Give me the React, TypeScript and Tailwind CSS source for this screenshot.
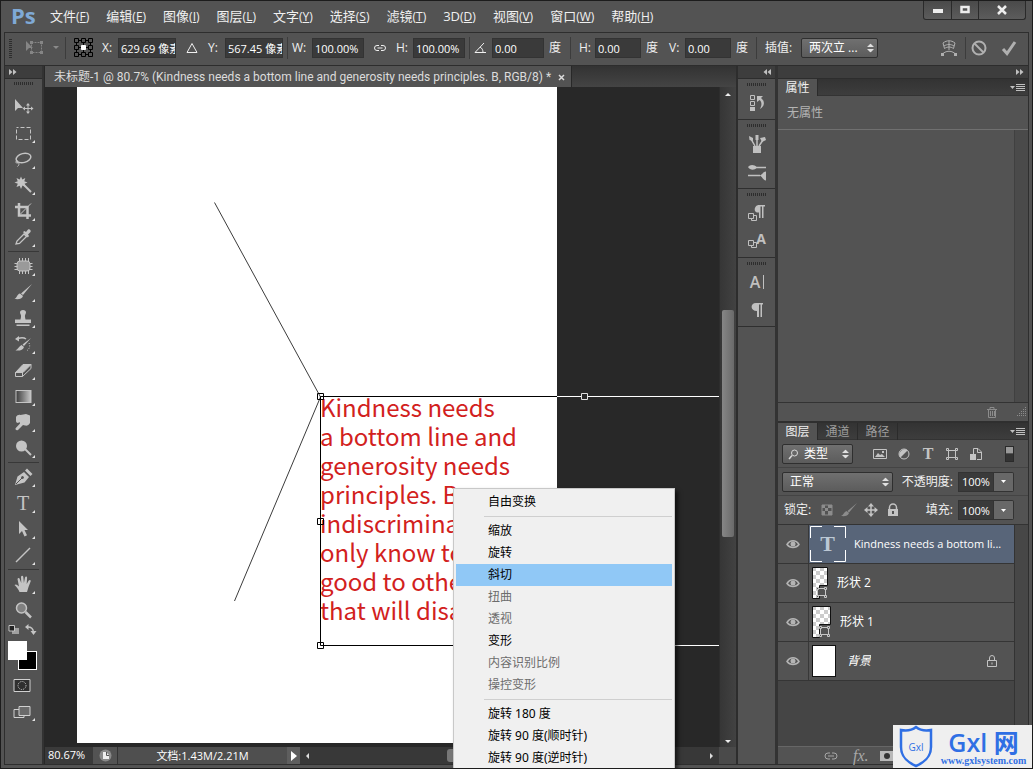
import React from "react"
import clsx from "clsx"

const MENUS = [
  ["文件", "F"],
  ["编辑", "E"],
  ["图像", "I"],
  ["图层", "L"],
  ["文字", "Y"],
  ["选择", "S"],
  ["滤镜", "T"],
  ["3D", "D"],
  ["视图", "V"],
  ["窗口", "W"],
  ["帮助", "H"],
]

const TEXT_LINES = [
  "Kindness needs",
  "a bottom line and",
  "generosity needs",
  "principles. B",
  "indiscrimina",
  "only know to",
  "good to othe",
  "that will disa",
]

const CONTEXT_MENU = [
  [{ label: "自由变换" }],
  [
    { label: "缩放" },
    { label: "旋转" },
    { label: "斜切", active: true },
    { label: "扭曲", disabled: true },
    { label: "透视", disabled: true },
    { label: "变形" },
    { label: "内容识别比例", disabled: true },
    { label: "操控变形", disabled: true },
  ],
  [
    { label: "旋转 180 度" },
    { label: "旋转 90 度(顺时针)" },
    { label: "旋转 90 度(逆时针)" },
  ],
] as { label: string; active?: boolean; disabled?: boolean }[][]

interface IconProps {
  children: React.ReactNode
  size?: number
  className?: string
}

const Icon = ({ children, size = 20, className }: IconProps) => (
  <svg
    width={size}
    height={size}
    viewBox={`0 0 ${size} ${size}`}
    fill="none"
    stroke="currentColor"
    aria-hidden="true"
    className={clsx("shrink-0 overflow-visible", className)}
  >
    {children}
  </svg>
)

// Tools, split in the groups of the toolbar
const TOOL_GROUPS: { name: string; single?: boolean; icon: React.ReactNode }[][] = [
  [
    {
      name: "移动",
      single: true,
      icon: (
        <>
          <path d="M2 2v12l3-3h5z" fill="currentColor" stroke="none" />
          <path d="M15 7v9M11 11.500h9" />
          <path d="M15 6l-2 2.500h4zM15 17l-2-2.500h4zM9.500 11.500l2.500-2v4zM20.500 11.500l-2.500-2v4z" fill="currentColor" stroke="none" />
        </>
      ),
    },
    { name: "矩形选框", icon: <rect x="3.500" y="4.500" width="14" height="12" strokeDasharray="4 2" strokeDashoffset="2" /> },
    {
      name: "套索",
      icon: (
        <>
          <ellipse cx="10.500" cy="9" rx="7.500" ry="4.500" transform="rotate(-14 10.500 9)" strokeWidth="1.500" />
          <path d="M5 12c-2.500-.5-3 2-1 2s1.500-1.500 0-1c2.500.5 2.500 3 .5 4.500" />
        </>
      ),
    },
    {
      name: "魔棒",
      icon: (
        <>
          <path d="M8 1.500l1.300 3 3-1.500-1 3.200 3.200 1.300-3 1.300 1.300 3.200-3.300-1.500L8 14l-1.300-3.300L3.500 12l1.300-3.200L1.500 7.500l3.200-1.300L3.500 3l3.200 1.500z" fill="currentColor" stroke="none" />
          <path d="M10 9l8 8" strokeWidth="2" />
        </>
      ),
    },
    {
      name: "裁剪",
      icon: (
        <>
          <path d="M6 2v12.500h12M2 6h12.500v12" strokeWidth="2.500" />
          <path d="M7.500 13L18 2.500" />
        </>
      ),
    },
    {
      name: "吸管",
      icon: (
        <>
          <path d="M3 17l1-3 7-7 2.500 2.500-7 7z" strokeWidth="1.300" />
          <path d="M10 5l1.500-1 1.500 1 2-2.500c1.500-1 3.500 1 2.500 2.500L15 7.500l1 1.500-1.200 1.500z" fill="currentColor" stroke="none" />
        </>
      ),
    },
  ],
  [
    {
      name: "修补",
      icon: (
        <>
          <rect x="4" y="5" width="13" height="10" rx="3" fill="#9a9a9a" />
          <path d="M6.500 2v3M9.500 2v3M12.500 2v3M15.500 2v3M6.500 15v3M9.500 15v3M12.500 15v3M15.500 15v3M1.500 7.500h3M1.500 10.500h3M1.500 13.500h3M17 7.500h2.500M17 10.500h2.500M17 13.500h2.500" />
        </>
      ),
    },
    { name: "画笔", icon: <path d="M19 2L10 13l-2-1.500zM7 11.500l3 2.500c-1 3-4 3.500-8.500 3 2.500-1 2.500-5 5.500-5.500z" fill="currentColor" stroke="none" /> },
    { name: "图章", icon: <path d="M8 9c.5-2-1-3-1-4.500a3 2.500 0 016 0C13 6 11.500 7 12 9l.5 2.500H18V15H2v-3.500h5.500zM3.500 16.500h13V18h-13z" fill="currentColor" stroke="none" /> },
    {
      name: "历史记录画笔",
      icon: (
        <>
          <path d="M18 4l-7 8-1.500-1.500zM8.500 11l2.500 2c-1 3-4 4-8.500 3.500 2.500-1 3.500-4.500 6-5.500zM2 5l4-3v5.500z" fill="currentColor" stroke="none" />
          <path d="M5 4.500c3-1 6-1 8 .5" strokeWidth="1.500" />
          <path d="M16 9c1.500 3 .5 6-2.500 8" strokeDasharray="1 1.500" />
        </>
      ),
    },
    {
      name: "橡皮擦",
      icon: (
        <>
          <path d="M2.500 12.500L10 4.500h8l-8 8z" fill="currentColor" />
          <path d="M2.500 12.500h7v4h-7zM9.500 16.500l8.500-8v-4" />
        </>
      ),
    },
    {
      name: "渐变",
      icon: (
        <>
          <defs>
            <linearGradient id="tool-gradient">
              <stop stopColor="#3c3c3c" />
              <stop offset="1" stopColor="#c8c8c8" />
            </linearGradient>
          </defs>
          <rect x="3" y="4.500" width="15" height="12" fill="url(#tool-gradient)" />
        </>
      ),
    },
    { name: "涂抹", icon: <path d="M3 5c1-2 3-2.500 4.500-2L13 2l4 1.500v7.500c-1 2-3 3-5 2.500l-2-.5-5 5c-1.500 1-3.300-.5-2.200-2L7 11.500 6.500 10 5 11c-1.500 0-2.200-1-2-3z" fill="currentColor" stroke="none" /> },
    {
      name: "减淡",
      icon: (
        <>
          <circle cx="8.500" cy="8" r="5.500" fill="currentColor" stroke="none" />
          <path d="M12 11l6 6" strokeWidth="2" />
        </>
      ),
    },
  ],
  [
    {
      name: "钢笔",
      icon: (
        <>
          <path d="M2 18L4.500 9.500 11 5l5 5-4.500 5.500zM12 3.500L14 1.500 19.500 7l-2 2z" fill="currentColor" stroke="none" />
          <path d="M3 17l6-6" stroke="#535353" />
          <circle cx="9.500" cy="10.500" r="1" fill="#535353" stroke="#535353" />
        </>
      ),
    },
    {
      name: "横排文字",
      icon: (
        <text x="10" y="17" textAnchor="middle" fill="currentColor" stroke="none" className="font-['Liberation_Serif'] text-[20px]">
          T
        </text>
      ),
    },
    { name: "路径选择", icon: <path d="M6 2v13l3-3 2.500 5.500 2.500-1.200L11.500 11H15z" fill="currentColor" stroke="none" /> },
    { name: "直线", icon: <path d="M3 17L17 3" strokeWidth="1.500" /> },
  ],
  [
    { name: "抓手", icon: <path d="M6.500 18c-1-3-3-5-5-7 1.500-1.500 3 0 4.500 1.500L4.500 5c.5-1.500 2-1 2.300.2L8.300 9 8 3c.3-1.600 2-1.600 2.300 0l.6 6L12 3.500c.5-1.500 2-1.200 2.100.3L13.700 10l2-3.500c1-1.200 2.300-.5 2 .8L15.500 13l-1.500 5z" fill="currentColor" stroke="none" /> },
    {
      name: "缩放",
      single: true,
      icon: (
        <>
          <circle cx="8.500" cy="8" r="5" fill="#808080" strokeWidth="1.500" />
          <path d="M12.500 12l5.500 5.500" strokeWidth="2.500" />
        </>
      ),
    },
  ],
]

const Grip = ({ className }: { className?: string }) => (
  <div className={clsx("h-[3px] w-5 bg-[repeating-linear-gradient(90deg,#2d2d2d_0_1px,transparent_1px_2px)]", className)} />
)

const Chevrons = ({ left }: { left?: boolean }) => (
  <svg width="8" height="6" viewBox="0 0 8 6" fill="#c0c0c0" aria-hidden="true" className={clsx(left && "rotate-180")}>
    <path d="M0 0l3.500 3L0 6zM4 0l3.500 3L4 6z" />
  </svg>
)

const UpDown = () => (
  <svg width="7" height="9" viewBox="0 0 7 9" fill="#e0e0e0" aria-hidden="true" className="pointer-events-none absolute top-1/2 right-[4px] -translate-y-1/2">
    <path d="M0 3.500L3.500 0 7 3.500zM0 5.500h7L3.500 9z" />
  </svg>
)

const Dropdown = ({ label, value, className, search }: { label: string; value: string; className?: string; search?: boolean }) => (
  <div className={clsx("relative h-5 shrink-0", className)}>
    <select
      aria-label={label}
      className={clsx(
        "block h-full w-full appearance-none rounded-[2px] border border-[#2f2f2f] bg-linear-to-b from-[#707070] to-[#5c5c5c] text-[12px] leading-[16px] text-white",
        search ? "pl-[21px]" : "pl-[7px]"
      )}
    >
      <option>{value}</option>
    </select>
    {search && (
      <Icon size={11} className="pointer-events-none absolute top-[5px] left-[6px] text-[#d8d8d8]">
        <circle cx="6.500" cy="4" r="3" />
        <path d="M4 6.500L1 10" strokeWidth="1.500" />
      </Icon>
    )}
    <UpDown />
  </div>
)

const Divider = () => <span className="h-[22px] w-px shrink-0 border-l border-[#3c3c3c]" />

interface FieldProps {
  label: React.ReactNode
  name: string
  value: string
  unit?: string
  labelClass: string
  inputClass: string
}

const Field = ({ label, name, value, unit, labelClass, inputClass }: FieldProps) => (
  <div className="flex shrink-0 items-center">
    <label htmlFor={name} className={clsx("flex items-center", labelClass)}>
      {label}
    </label>
    <input
      id={name}
      aria-label={name}
      defaultValue={value}
      className={clsx("h-5 border border-[#333] bg-[#3a3a3a] pl-[2px] text-[11px] text-white outline-none", inputClass)}
    />
    {unit && <span className="w-[17px] pl-[5px] text-[12px] whitespace-nowrap">{unit}</span>}
  </div>
)

const MenuBar = () => (
  <header className="flex h-[31px] shrink-0 items-start pl-[10px]">
    <span className="w-[39px] font-['Open_Sans'] text-[22px] leading-[28px] font-bold text-[#7fa9d6]">Ps</span>
    <nav className="flex min-w-0 flex-1 gap-[17px]">
      {MENUS.map(([label, key]) => (
        <button key={key} className="text-[13px] leading-[30px] whitespace-nowrap">
          {label}
          <span className="text-[12px]">
            (<span className="underline">{key}</span>)
          </span>
        </button>
      ))}
    </nav>
    <div className="mr-[6px] flex h-[19px] rounded-b-[3px] border border-t-0 border-[#2a2a2a] bg-linear-to-b from-[#4a4a4a] to-[#5c5c5c] text-[#ededed]">
      <button aria-label="最小化" className="flex w-[28px] items-center justify-center border-r border-[#2a2a2a]">
        <Icon size={12}>
          <path d="M1 7h10" strokeWidth="4" />
        </Icon>
      </button>
      <button aria-label="最大化" className="flex w-[27px] items-center justify-center border-r border-[#2a2a2a]">
        <Icon size={12}>
          <path d="M2.500 3h7v5h-7z" strokeWidth="2.500" />
        </Icon>
      </button>
      <button aria-label="关闭" className="flex w-[46px] items-center justify-center">
        <Icon size={12}>
          <path d="M2 2l8 8M10 2l-8 8" strokeWidth="2.500" />
        </Icon>
      </button>
    </div>
  </header>
)

const OptionsBar = () => (
  <div className="flex h-[33px] shrink-0 items-center border-b border-[#2d2d2d] pb-[2px] text-[12px]">
    <div className="ml-[4px] h-5 w-[3px] bg-[repeating-linear-gradient(0deg,#2d2d2d_0_1px,transparent_1px_2px)]" />
    <Icon size={18} className="ml-[14px] text-[#858585]">
      <path d="M0 2v10l3-3h4z" fill="currentColor" stroke="none" />
      <rect x="5.500" y="3.500" width="10" height="10" strokeDasharray="2 1" />
      <path d="M4 2h3v3H4zM14 2h3v3h-3zM14 12h3v3h-3zM4 12h3v3H4z" fill="currentColor" stroke="none" />
    </Icon>
    <Icon size={6} className="ml-[9px] text-[#8a8a8a]">
      <path d="M0 1h6L3 4z" fill="currentColor" stroke="none" />
    </Icon>
    <div className="w-[6px]" />
    <Divider />
    <Icon size={20} className="mx-[8px] text-black">
      <path d="M2.500 2.500h14v14h-14zM9.500 2v15M2 9.500h15" />
      <path
        d="M.5 .5h4v4h-4zM7.500 .5h4v4h-4zM14.500 .5h4v4h-4zM.5 7.500h4v4h-4zM14.500 7.500h4v4h-4zM.5 14.500h4v4h-4zM7.500 14.500h4v4h-4zM14.500 14.500h4v4h-4z"
        fill="#535353"
      />
      <path d="M7.500 7.500h4v4h-4z" fill="#fff" stroke="#fff" />
    </Icon>
    <Field name="X" label="X:" value="629.69 像素" labelClass="w-[16px]" inputClass="w-[58px]" />
    <button aria-label="相对定位" className="flex w-[32px] justify-center">
      <Icon size={12}>
        <path d="M6 1.500l5 9H1z" />
      </Icon>
    </button>
    <Field name="Y" label="Y:" value="567.45 像素" labelClass="w-[17px]" inputClass="w-[58px]" />
    <div className="w-[4px]" />
    <Divider />
    <Field name="W" label="W:" value="100.00%" labelClass="w-[24px] pl-[4px]" inputClass="w-[52px]" />
    <button aria-label="保持长宽比" className="flex w-[32px] justify-center">
      <Icon size={12}>
        <path d="M5 3.500H3a2.500 2.500 0 000 5h2M7 3.500h2a2.500 2.500 0 010 5H7M3.500 6h5" />
      </Icon>
    </button>
    <Field name="H" label="H:" value="100.00%" labelClass="w-[17px]" inputClass="w-[52px]" />
    <div className="w-[4px]" />
    <Divider />
    <Field
      name="旋转"
      label={
        <Icon size={14}>
          <path d="M11 2L2 11.500h11M7 6c2 1 3 3 3 5.500" />
        </Icon>
      }
      value="0.00"
      unit="度"
      labelClass="w-[22px] pl-[3px]"
      inputClass="w-[52px]"
    />
    <div className="w-[9px]" />
    <Divider />
    <Field name="水平斜切" label="H:" value="0.00" unit="度" labelClass="w-[24px] pl-[8px]" inputClass="w-[46px]" />
    <Field name="垂直斜切" label="V:" value="0.00" unit="度" labelClass="w-[27px] pl-[11px]" inputClass="w-[46px]" />
    <div className="w-[8px]" />
    <Divider />
    <span className="w-[44px] pl-[8px] whitespace-nowrap">插值:</span>
    <Dropdown label="插值" value="两次立 ..." className="w-[77px]" />
    <div className="ml-auto flex items-center text-[#b0b0b0]">
      <button aria-label="变形模式">
        <Icon size={18}>
          <path d="M3 4c4-3 8-3 12 0l-1.500 5.500c-3-2-6-2-9 0zM9 2v9M4 7c3-2 7-2 10 0M1.500 16c4-5 11-5 15 0" />
          <path d="M1 14h3v3H1zM14 14h3v3h-3z" fill="currentColor" stroke="none" />
        </Icon>
      </button>
      <div className="w-[7px]" />
      <Divider />
      <button aria-label="取消" className="mr-[14px] ml-[5px]">
        <Icon size={16}>
          <circle cx="8" cy="8" r="6.500" strokeWidth="2" />
          <path d="M3.500 3.500l9 9" strokeWidth="2" />
        </Icon>
      </button>
      <button aria-label="提交" className="mr-[11px]">
        <Icon size={16}>
          <path d="M2 9l4 4.500L14 2" strokeWidth="3" />
        </Icon>
      </button>
    </div>
  </div>
)

const Toolbar = () => (
  <aside className="flex w-[39px] shrink-0 flex-col border-r-2 border-[#333]">
    <div className="flex h-[13px] items-center border-b border-[#2d2d2d] bg-[#3d3d3d] pl-[4px]">
      <Chevrons />
    </div>
    <Grip className="mt-[3px] ml-[9px]" />
    <div className="mt-[9px] flex flex-col text-[#c4c4c4]">
      {TOOL_GROUPS.map((group, i) => (
        <div key={i} className="flex flex-col">
          {i > 0 && <div className="mx-[3px] my-px h-px bg-[#383838]" />}
          {group.map(({ name, icon, single }) => (
            <button key={name} aria-label={name} className="relative flex h-[26px] items-center pl-[8px]">
              <Icon>{icon}</Icon>
              {!single && <span className="absolute right-[7px] bottom-[3px] border-b-3 border-l-3 border-b-[#e4e4e4] border-l-transparent" />}
            </button>
          ))}
        </div>
      ))}
    </div>
    <div className="mt-px flex justify-between pr-[6px] pl-[3px] text-[#c4c4c4]">
      <Icon size={11}>
        <path d="M4 4h7v6H4z" fill="#a0a0a0" stroke="none" />
        <path d="M1 1.500h5.500V7H1z" fill="#222" />
      </Icon>
      <Icon size={11}>
        <path d="M3 3c3 0 5 1 5.500 5" strokeWidth="1.500" />
        <path d="M0 3l3.500-3v6zM5.500 7h6l-3 4z" fill="currentColor" stroke="none" />
      </Icon>
    </div>
    <div className="relative mt-[6px] ml-[3px] h-[29px] w-[29px]">
      <button aria-label="背景色" className="absolute right-0 bottom-0 size-[19px] border border-white bg-black" />
      <button aria-label="前景色" className="absolute top-0 left-0 size-[19px] bg-white" />
    </div>
    <button aria-label="快速蒙版" className="mt-[6px] ml-[8px] text-[#d0d0d0]">
      <Icon size={18}>
        <path d="M1 3.500h16v12H1z" fill="#2f2f2f" />
        <circle cx="9" cy="9.500" r="4" strokeDasharray="1 1" />
      </Icon>
    </button>
    <button aria-label="屏幕模式" className="relative mt-[9px] pl-[8px] text-[#d0d0d0]">
      <Icon size={18}>
        <path d="M1 6.500h10v8H1z" />
        <path d="M6 3.500h11v9H6z" fill="#6a6a6a" />
      </Icon>
      <span className="absolute right-[7px] bottom-0 border-b-3 border-l-3 border-b-[#e4e4e4] border-l-transparent" />
    </button>
  </aside>
)

const Canvas = () => (
  <div className="relative min-w-0 flex-1 overflow-hidden bg-[#282828] pb-[4px] pl-[32px]">
    <div className="h-full w-[480px] bg-white" />
    <p className="absolute top-[305px] left-[275px] font-['Noto_Sans_CJK_SC'] text-[24px] leading-[29px] whitespace-nowrap text-[#d2211d]">
      {TEXT_LINES.map((line) => (
        <span key={line} className="block">
          {line}
        </span>
      ))}
    </p>
    <svg width="674" height="655" className="absolute top-0 left-0" fill="none" aria-hidden="true">
      <path d="M169.500 115.500L275.500 310L189.500 514" stroke="#3c3c3c" />
      <path d="M512 309.500H275.500V558.500H512" stroke="#000" />
      <path d="M512 309.500H674M512 558.500H674" stroke="#fff" />
      <path d="M272.500 306.500h6v6h-6zM272.500 431.500h6v6h-6zM272.500 555.500h6v6h-6z" stroke="#000" />
      <path d="M536.500 306.500h6v6h-6z" stroke="#e0e0e0" fill="#282828" />
    </svg>
  </div>
)

const StatusBar = () => (
  <footer className="flex h-[17px] shrink-0 items-center bg-[#3a3a3a] text-[11px] text-white">
    <span className="w-[48px] pl-[3px]">80.67%</span>
    <button aria-label="导出" className="flex h-full w-[24px] items-center justify-center bg-[#535353] text-[#bdbdbd]">
      <Icon size={13}>
        <circle cx="6.500" cy="6.500" r="6" fill="#8a8a8a" stroke="none" />
        <path d="M4 3h3l3 3v4H4z" fill="#eee" stroke="none" />
        <path d="M7.500 3v3.500H10" stroke="#555" />
      </Icon>
    </button>
    <span className="h-full w-[170px] border-l border-[#333] bg-[#4f4f4f] text-center leading-[17px]">文档:1.43M/2.21M</span>
    <button aria-label="状态菜单" className="flex h-full w-[13px] items-center justify-center bg-[#5e5e5e]">
      <svg width="6" height="10" viewBox="0 0 6 10" fill="#fff">
        <path d="M0 0l6 5-6 5z" />
      </svg>
    </button>
    <div className="flex h-full min-w-0 flex-1 items-center justify-between bg-[#383838] px-[6px]">
      <svg width="3" height="6" viewBox="0 0 3 6" fill="#ddd">
        <path d="M3 0v6L0 3z" />
      </svg>
      <div className="h-[13px] w-[126px] rounded-[3px] bg-[#777]" />
      <svg width="3" height="6" viewBox="0 0 3 6" fill="#ddd">
        <path d="M0 0v6l3-3z" />
      </svg>
    </div>
    <div className="h-full w-[17px] bg-[#4a4a4a]" />
  </footer>
)

const DocumentArea = () => (
  <main className="flex min-w-0 flex-1 flex-col border-l border-[#282828]">
    <div className="flex h-[21px] shrink-0 bg-linear-to-b from-[#333] to-[#444]">
      <div className="flex items-center border-r border-[#282828] bg-[#535353] pt-px pr-[6px] pl-[9px]">
        <span className="font-['Roboto','Noto_Sans_CJK_SC',sans-serif] text-[12px] whitespace-nowrap text-[#dcdcdc]">
          未标题-1 @ 80.7% (Kindness needs a bottom line and generosity needs principles. B, RGB/8) *
        </span>
        <button aria-label="关闭文档" className="ml-[7px] text-[#dcdcdc]">
          <Icon size={7}>
            <path d="M1 1l5 5M6 1L1 6" strokeWidth="1.500" />
          </Icon>
        </button>
      </div>
    </div>
    <div className="flex min-h-0 flex-1">
      <Canvas />
      <div className="flex w-[17px] shrink-0 flex-col items-center border-l border-[#2d2d2d] bg-linear-to-r from-[#363636] to-[#424242]">
        <svg width="6" height="3" viewBox="0 0 6 3" fill="#eee" className="mt-[6px] shrink-0">
          <path d="M0 3l3-3 3 3z" />
        </svg>
        <div className="grow-[213]" />
        <div className="w-[12px] grow-[227] rounded-[2px] bg-linear-to-r from-[#868686] to-[#6a6a6a]" />
        <div className="grow-[202]" />
        <svg width="6" height="3" viewBox="0 0 6 3" fill="#eee" className="mb-[4px] shrink-0">
          <path d="M0 0h6L3 3z" />
        </svg>
      </div>
    </div>
    <StatusBar />
  </main>
)

const DOCK: { name: string; icon: React.ReactNode }[][] = [
  [
    {
      name: "历史记录",
      icon: (
        <>
          <path d="M3.500 2.500h4v4h-4zM3.500 8.500h4v4h-4z" />
          <path d="M3 14h5v4H3z" fill="currentColor" stroke="none" />
          <path d="M10 3h6l-2 2c4 3 4 8-1 11 2-4 2-7-.5-9L10 9z" fill="currentColor" stroke="none" />
        </>
      ),
    },
  ],
  [
    {
      name: "画笔预设",
      icon: (
        <>
          <path d="M6 12h8v7H6z" fill="currentColor" stroke="none" />
          <path d="M8 12L4 5M10 12V5M12 12l4-6" strokeWidth="1.500" />
          <path d="M2 2l4 2v3L2.500 6zM8.500 1h3v5h-3zM13 4l5-1 1 3-4 2z" fill="currentColor" stroke="none" />
        </>
      ),
    },
    {
      name: "画笔",
      icon: (
        <>
          <path d="M8 5.500h11M1 13.500h12" strokeWidth="1.500" />
          <path d="M1 5c2-2.500 6-3 9 .5C7 9 3 8 1 5zM12 13.500c3 0 4-4 7-4v9c-3 0-4-5-7-5z" fill="currentColor" stroke="none" />
        </>
      ),
    },
  ],
  [
    {
      name: "段落样式",
      icon: (
        <>
          <path d="M11 9.500C6 10 7 2 12 2h6v1.500h-1.500V15H15V3.500h-1.500V15H12V9.500z" fill="currentColor" stroke="none" />
          <path d="M1.500 10.500h5v5h-5z" />
          <path d="M6.500 12.500h3v5h-5v-2" />
        </>
      ),
    },
    {
      name: "字符样式",
      icon: (
        <>
          <text x="14" y="13" textAnchor="middle" fill="currentColor" stroke="none" className="text-[14px] font-bold">
            A
          </text>
          <path d="M1.500 9.500h5v5h-5z" />
          <path d="M6.500 11.500h3v5h-5v-2" />
        </>
      ),
    },
  ],
  [
    {
      name: "字符",
      icon: (
        <>
          <text x="8" y="16" textAnchor="middle" fill="currentColor" stroke="none" className="text-[16px] font-semibold">
            A
          </text>
          <path d="M16.500 3v14" />
        </>
      ),
    },
    { name: "段落", icon: <path d="M10 11C3 11 3 3 9 3h7v1.500h-1V17h-1.500V4.500H12V17h-2z" fill="currentColor" stroke="none" /> },
  ],
]

const IconDock = () => (
  <aside className="flex w-[41px] shrink-0 flex-col border-x-2 border-l-[#2d2d2d] border-r-[#333]">
    <div className="flex h-[13px] shrink-0 items-center justify-end border-b border-[#2d2d2d] bg-[#3d3d3d] pr-[4px]">
      <Chevrons left />
    </div>
    {DOCK.map((group, i) => (
      <div key={i} className="border-b border-[#2f2f2f] pb-[2px] text-[#c0c0c0]">
        <div className="flex h-[10px] items-center justify-center">
          <Grip />
        </div>
        {group.map(({ name, icon }) => (
          <button key={name} aria-label={name} className="flex h-[28px] w-full items-center justify-center">
            <Icon>{icon}</Icon>
          </button>
        ))}
      </div>
    ))}
  </aside>
)

const PanelTabs = ({ tabs }: { tabs: string[] }) => (
  <div className="flex h-[17px] shrink-0 border-b border-[#333] bg-linear-to-b from-[#333] to-[#3d3d3d] text-[12px]">
    {tabs.map((tab, i) => (
      <button
        key={tab}
        className={clsx(
          "-mb-px h-[17px] w-[40px] border-r border-[#2b2b2b] leading-[16px]",
          i === 0 ? "bg-[#535353] text-[#f0f0f0]" : "text-[#9d9d9d]"
        )}
      >
        {tab}
      </button>
    ))}
    <button aria-label="面板菜单" className="mr-[3px] ml-auto">
      <svg width="15" height="9" viewBox="0 0 15 9" stroke="#c0c0c0" fill="#c0c0c0">
        <path d="M6 1.500h9M6 3.500h9M6 5.500h9M6 7.500h9" />
        <path d="M0 3h5L2.500 6z" stroke="none" />
      </svg>
    </button>
  </div>
)

const PercentField = ({ label }: { label: string }) => (
  <div className="ml-auto flex items-center">
    <label htmlFor={label} className="pr-[5px] text-[12px] whitespace-nowrap">
      {label}:
    </label>
    <input id={label} defaultValue="100%" className="h-5 w-[36px] border border-[#333] bg-[#3a3a3a] pl-[3px] text-[11px] text-white outline-none" />
    <button aria-label={label + "滑块"} className="flex h-5 w-[20px] items-center justify-center rounded-r-[2px] border border-l-0 border-[#333] bg-[#686868]">
      <svg width="5" height="3" viewBox="0 0 5 3" fill="#fff">
        <path d="M0 0h5L2.500 3z" />
      </svg>
    </button>
  </div>
)

const ShapeThumb = ({ width }: { width: number }) => (
  <svg width={width} height="32" aria-hidden="true" className="ml-[3px] overflow-visible">
    <defs>
      <pattern id="checker" width="8" height="8" patternUnits="userSpaceOnUse">
        <path d="M0 0h8v8H0z" fill="#fff" />
        <path d="M0 0h4v4H0zM4 4h4v4H4z" fill="#ccc" />
      </pattern>
    </defs>
    <path d={`M.5 .5h${width - 1}v18h${8 - width}v13H.5z`} fill="url(#checker)" stroke="#111" />
    <g fill="#535353" stroke="#c8c8c8">
      <path d={`M${width - 10.5} 21.500h8v7h-8z`} />
      <path d={`M${width - 11.5} 20.500h2v2h-2zM${width - 3.5} 20.500h2v2h-2zM${width - 3.5} 28.500h2v2h-2zM${width - 11.5} 28.500h2v2h-2z`} />
    </g>
  </svg>
)

const LAYERS = [
  {
    name: "Kindness needs a bottom li...",
    selected: true,
    gap: "ml-[8px]",
    thumb: (
      <svg width="36" height="36" fill="none" aria-hidden="true" className="ml-px">
        <path d="M.5 12V.5H12M24 .5h11.500V12M35.500 24v11.500H24M12 35.500H.5V24" stroke="#fff" />
        <text x="17.500" y="25" textAnchor="middle" fill="#bcc8d4" className="font-['Liberation_Serif'] text-[22px] font-bold">
          T
        </text>
      </svg>
    ),
  },
  { name: "形状 2", gap: "ml-[9px]", thumb: <ShapeThumb width={16} /> },
  { name: "形状 1", gap: "ml-[9px]", thumb: <ShapeThumb width={19} /> },
  {
    name: "背景",
    italic: true,
    locked: true,
    gap: "ml-[11px]",
    thumb: <div className="ml-[3px] h-[32px] w-[24px] border border-[#111] bg-white" />,
  },
]

const LockIcon = () => (
  <Icon size={14}>
    <path d="M2.500 6.500h9v6h-9zM4.500 6.500V4a2.500 2.500 0 015 0v2.500M7 8.500v2" />
  </Icon>
)

const LayersPanel = () => (
  <section className="flex min-h-0 flex-1 flex-col">
    <PanelTabs tabs={["图层", "通道", "路径"]} />
    <div className="flex h-[28px] shrink-0 items-center border-b border-[#444] pr-[14px] pl-[4px] text-[#c4c4c4]">
      <Dropdown label="滤镜类型" value="类型" search className="w-[71px]" />
      <div className="ml-[20px] flex flex-1 items-center gap-[10px]">
        <button aria-label="像素图层">
          <Icon size={14}>
            <path d="M.5 2.500h13v9H.5z" />
            <path d="M2 10l3-4 2 2 2-1 3 3zM9 4h2v2H9z" fill="currentColor" stroke="none" />
          </Icon>
        </button>
        <button aria-label="调整图层">
          <Icon size={14}>
            <circle cx="7" cy="7" r="5" />
            <path d="M3.500 10.500a5 5 0 017-7z" fill="currentColor" stroke="none" />
          </Icon>
        </button>
        <button aria-label="文字图层">
          <Icon size={14}>
            <text x="7" y="12" textAnchor="middle" fill="currentColor" stroke="none" className="font-['Liberation_Serif'] text-[16px] leading-[14px] font-bold">
              T
            </text>
          </Icon>
        </button>
        <button aria-label="形状图层">
          <Icon size={14}>
            <path d="M3.500 3.500h7v7h-7zM1.500 1.500h2v2h-2zM10.500 1.500h2v2h-2zM10.500 10.500h2v2h-2zM1.500 10.500h2v2h-2z" />
          </Icon>
        </button>
        <button aria-label="智能对象">
          <Icon size={14}>
            <path d="M4.500 7V1.500H9l3.500 3.500v7.500H8M8.500 1.500v4h4" />
            <path d="M1 7h6v6H1z" fill="currentColor" stroke="none" />
          </Icon>
        </button>
      </div>
      <button aria-label="打开滤镜" className="h-[16px] w-[9px] border border-[#2b2b2b] bg-linear-to-b from-[#999] from-40% to-[#333] to-50%" />
    </div>
    <div className="flex h-[28px] shrink-0 items-center border-b border-[#444] pr-[14px] pl-[4px]">
      <Dropdown label="混合模式" value="正常" className="w-[111px]" />
      <PercentField label="不透明度" />
    </div>
    <div className="flex h-[29px] shrink-0 items-center border-b border-[#333] pr-[14px] pl-[6px]">
      <span className="text-[12px]">锁定:</span>
      <div className="ml-[8px] flex items-center gap-[6px] text-[#8c8c8c]">
        <button aria-label="锁定透明像素">
          <Icon size={16}>
            <path d="M3 3h10v10H3z" />
            <path d="M3 3h3v3H3zM9 3h4v3H9zM6 6h3v3H6zM3 9h3v4H3zM9 9h4v4H9z" fill="currentColor" stroke="none" />
          </Icon>
        </button>
        <button aria-label="锁定图像像素">
          <Icon size={16}>
            <path d="M16 1L8 10.500 6.500 9zM5.500 9l2.500 2c-1 3-4 3.500-8 3 2.500-1 3-4 5.500-5z" fill="currentColor" stroke="none" />
          </Icon>
        </button>
        <button aria-label="锁定位置" className="text-[#c4c4c4]">
          <Icon size={16}>
            <path d="M8 3v10M3 8h10" strokeWidth="1.500" />
            <path d="M8 1l3 3.500H5zM8 15l3-3.500H5zM1 8l3.500-3v6zM15 8l-3.500-3v6z" fill="currentColor" stroke="none" />
          </Icon>
        </button>
        <button aria-label="锁定全部" className="text-[#c4c4c4]">
          <Icon size={16}>
            <path d="M4.500 7V5.500a3.500 3.500 0 017 0V7" strokeWidth="1.500" />
            <path d="M3 7h10v7H3zM7 9v3h2V9z" fill="currentColor" fillRule="evenodd" stroke="none" />
          </Icon>
        </button>
      </div>
      <PercentField label="填充" />
    </div>
    <div className="flex min-h-0 flex-1">
      <ul className="min-w-0 flex-1 bg-[#454545]">
        {LAYERS.map((layer) => (
          <li key={layer.name} className="flex h-[39px] border-b border-[#353535] bg-[#535353]">
            <button aria-label={"显示 " + layer.name} className="flex w-[31px] items-center justify-center border-r border-[#383838] text-[#b4b4b4]">
              <Icon size={14}>
                <path d="M1 7.500c3-5 9-5 12 0-3 4-9 4-12 0z" strokeWidth="1.500" />
                <circle cx="7" cy="7" r="2.500" fill="currentColor" stroke="none" />
              </Icon>
            </button>
            <div className={clsx("flex min-w-0 flex-1 items-center", layer.selected && "bg-[#586579]")}>
              {layer.thumb}
              <span className={clsx("truncate text-white", layer.gap, layer.italic && "italic", layer.selected ? "text-[11px]" : "text-[12px]")}>
                {layer.name}
              </span>
              {layer.locked && (
                <span className="mr-[15px] ml-auto text-[#c4c4c4]">
                  <LockIcon />
                </span>
              )}
            </div>
          </li>
        ))}
      </ul>
      <div className="w-[14px] border-l border-[#333] bg-[#474747]" />
    </div>
    <div className="flex h-[18px] shrink-0 items-center gap-[15px] border-t border-[#666] pl-[46px] text-[#a8a8a8]">
      <button aria-label="链接图层">
        <Icon size={14}>
          <path d="M6 4H4a3 3 0 000 6h2M8 4h2a3 3 0 010 6H8M4 7h6" />
        </Icon>
      </button>
      <button className="font-['Liberation_Serif'] text-[16px] leading-[16px] italic">fx.</button>
      <button aria-label="添加蒙版" className="-ml-[4px]">
        <Icon size={14}>
          <path d="M0 2h14v10H0z" fill="#b8b8b8" stroke="none" />
          <circle cx="7" cy="7" r="3" fill="#333" stroke="none" />
        </Icon>
      </button>
    </div>
  </section>
)

const Panels = () => (
  <aside className="flex w-[251px] shrink-0 flex-col border-l border-[#333]">
    <div className="flex h-[13px] shrink-0 items-center justify-end border-b border-[#2d2d2d] bg-[#3d3d3d] pr-[4px]">
      <Chevrons />
    </div>
    <section className="flex h-[344px] shrink-0 flex-col border-b-2 border-[#2f2f2f]">
      <PanelTabs tabs={["属性"]} />
      <p className="h-[34px] shrink-0 border-b border-[#707070] pl-[9px] text-[12px] leading-[34px] text-[#b4b4b4]">无属性</p>
      <div className="flex flex-1">
        <div className="flex-1" />
        <div className="w-[14px] border-l border-[#404040] bg-[#4a4a4a]" />
      </div>
      <div className="flex h-[19px] items-center justify-end gap-[18px] border-t border-[#333] pr-[2px] text-[#8c8c8c]">
        <button aria-label="删除">
          <Icon size={12}>
            <path d="M1 3.500h10M4 3V1.500h4V3M2.500 4v7.500h7V4M4.500 5v5M6.500 5v5M8.500 5v5" />
          </Icon>
        </button>
        <Icon size={10}>
          <path d="M9.500 0v10M7.500 2v8M5.500 4v6M3.500 6v4M1.500 8v2" strokeDasharray="1 1" />
        </Icon>
      </div>
    </section>
    <LayersPanel />
  </aside>
)

const ContextMenu = () => (
  <div role="menu" className="absolute top-[487px] left-[452px] w-[222px] border border-[#c8c8c8] bg-[#f0f0f0] px-[2px] py-[2px] font-['Noto_Sans','Noto_Sans_CJK_SC',sans-serif] text-[12px] shadow-[3px_3px_4px_rgba(0,0,0,0.6)]">
    {CONTEXT_MENU.map((group, i) => (
      <div key={i} className={clsx(i > 0 && "before:my-[3px] before:ml-[28px] before:block before:h-px before:bg-[#cfcfcf]")}>
        {group.map(({ label, active, disabled }) => (
          <button
            key={label}
            role="menuitem"
            disabled={disabled}
            className={clsx(
              "block h-[22px] w-full pl-[32px] text-left leading-[22px]",
              active && "bg-[#90c8f6]",
              disabled ? "text-[#6d6d6d]" : "text-black"
            )}
          >
            {label}
          </button>
        ))}
      </div>
    ))}
  </div>
)

const Watermark = () => (
  <a href="#" aria-label="Gxl 网" className="absolute -right-px -bottom-px flex h-[44px] w-[140px] items-center bg-[#efefef] pl-[5px] text-[#2f6fe4]">
    <svg width="36" height="44" viewBox="0 0 36 44" fill="none" stroke="currentColor" aria-hidden="true">
      <path d="M18 2c5 4 10 4 15 3v17c0 10-6 15-15 19C9 37 3 32 3 22V5c5 1 10 1 15-3z" strokeWidth="2.500" />
      <text x="18" y="26" textAnchor="middle" fill="currentColor" stroke="none" className="text-[10px]">
        Gxl
      </text>
    </svg>
    <span className="flex flex-1 flex-col items-center">
      <span className="text-[25px] leading-[28px] font-semibold whitespace-nowrap">Gxl 网</span>
      <span className="font-['Liberation_Serif'] text-[10px] leading-[10px] font-bold">www.gxlsystem.com</span>
    </span>
  </a>
)

export default function App() {
  return (
    <div className="relative flex h-screen flex-col overflow-hidden border border-[#1c1c1c] bg-[#535353] font-['Open_Sans','Noto_Sans_CJK_SC',sans-serif] text-[#f0f0f0]">
      <MenuBar />
      <div className="mx-[3px] mb-[3px] flex min-h-0 flex-1 flex-col border border-[#2e2e2e]">
        <OptionsBar />
        <div className="flex min-h-0 flex-1">
          <Toolbar />
          <DocumentArea />
          <IconDock />
          <Panels />
        </div>
      </div>
      <ContextMenu />
      <Watermark />
    </div>
  )
}
